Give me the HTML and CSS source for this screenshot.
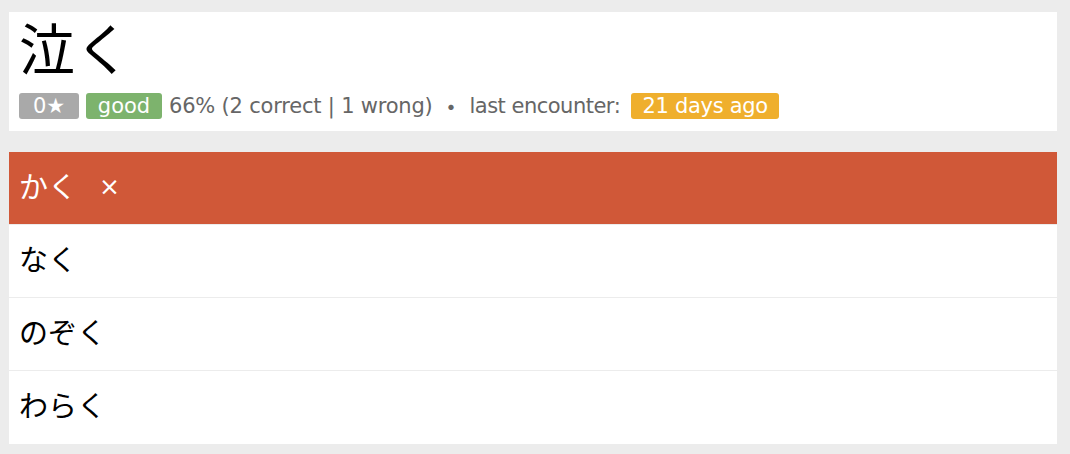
FILE: index.html
```html
<!DOCTYPE html>
<html lang="ja">
<head>
<meta charset="utf-8">
<link rel="stylesheet" href="styles.css">
</head>
<body>
<div class="page">
  <section class="card head">
    <h1 class="word">泣く</h1>
    <div class="meta">
      <span class="badge grey">0★</span>
      <span class="badge green">good</span>
      <span class="stat">66% (2 correct | 1 wrong)</span>
      <span class="sep">・</span>
      <span class="stat last">last encounter:</span>
      <span class="badge orange">21 days ago</span>
    </div>
  </section>
  <ul class="card answers">
    <li class="answer wrong">かく<span class="mark">×</span></li>
    <li class="answer">なく</li>
    <li class="answer">のぞく</li>
    <li class="answer">わらく</li>
  </ul>
</div>
</body>
</html>
```
FILE: styles.css
```css
html, body {
  margin: 0;
  padding: 0;
  background: #ececec;
}
body {
  font-family: "Noto Sans CJK JP", "Noto Sans", sans-serif;
  color: #000;
}
.page {
  padding: 12px 13px 10px 9px;
  display: flex;
  flex-direction: column;
  gap: 21px;
}
.card {
  background: #fff;
}
.head {
  padding: 0 10px 12px;
}
.word {
  margin: 0;
  font-weight: 400;
  font-size: 56px;
  line-height: 68px;
  height: 70px;
  margin-bottom: 11px;
}
.meta {
  display: flex;
  align-items: center;
  height: 26px;
  font-family: "DejaVu Sans", sans-serif;
  font-size: 21px;
  letter-spacing: -0.2px;
  color: #666;
  white-space: nowrap;
}
.meta > span { flex-shrink: 0; }
.badge {
  display: inline-flex;
  align-items: center;
  justify-content: center;
  height: 26px;
  box-sizing: border-box;
  padding: 0 0 1px;
  border-radius: 3px;
  color: #fff;
  margin-right: 7px;
  letter-spacing: 0;
}
.grey { background: #a9a9a9; width: 60px; }
.green { background: #7db36d; width: 76px; }
.orange { background: #efaf2d; width: 148px; margin-left: 11px; letter-spacing: -0.3px; }
.sep {
  font-family: "Noto Sans CJK JP", sans-serif;
  font-weight: 700;
  margin: 0 8px 0 8px;
}
.last { letter-spacing: -0.5px; }
.answers {
  list-style: none;
  margin: 0;
  padding: 0;
}
.answer {
  height: 73px;
  box-sizing: border-box;
  display: flex;
  align-items: center;
  padding: 0 10px 7px;
  font-size: 29px;
  border-top: 1px solid #ececec;
}
.answer:first-child { border-top: 0; height: 72px; }
.answer:last-child { height: 74px; }
.wrong {
  background: #d05838;
  color: #fff;
}
.mark {
  font-family: "DejaVu Sans", sans-serif;
  font-size: 25px;
  margin-left: 22px;
  padding-top: 3px;
}
```
